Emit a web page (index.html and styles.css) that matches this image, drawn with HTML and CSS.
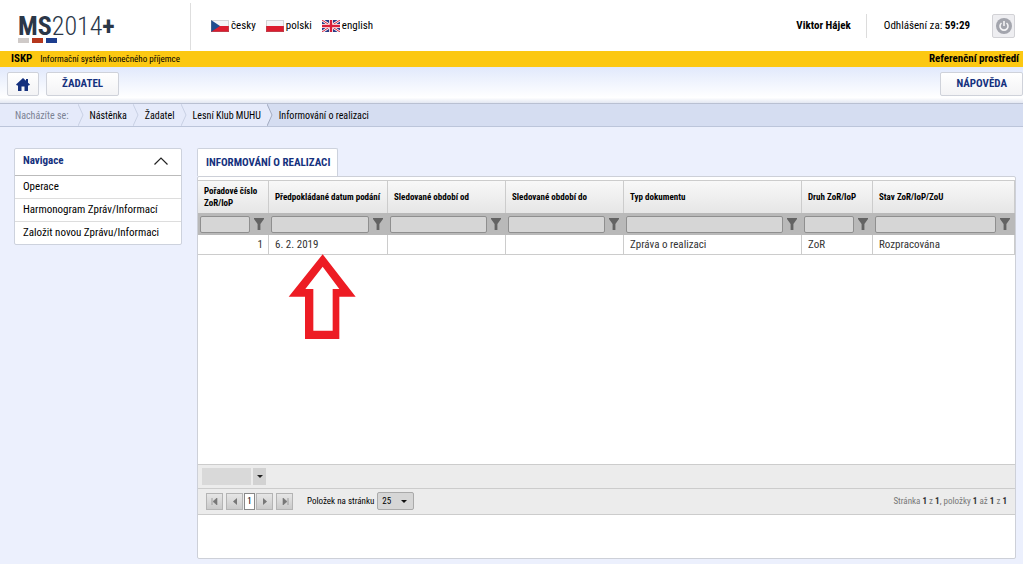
FILE: index.html
```html
<!DOCTYPE html>
<html lang="cs">
<head>
<meta charset="utf-8">
<meta name="viewport" content="width=device-width, initial-scale=1">
<title>MS2014+ – Informování o realizaci</title>
<link rel="stylesheet" href="styles.css">
</head>
<body>
<svg class="defs" aria-hidden="true">
  <symbol id="funnel" viewBox="0 0 10 12"><path d="M0 0h10v1L6.400 6V12H3.600V6L0 1z" fill="#636363"/></symbol>
  <symbol id="chevron" viewBox="0 0 6 22"><path d="M0 0l5 11-5 11" fill="none" stroke="#c9d1e4"/></symbol>
</svg>

<header class="top">
  <a class="logo" href="#" aria-label="MS2014+">
    <span class="logo-text"><b>MS</b><span class="logo-year">2014</span><b>+</b></span>
    <span class="logo-bars"><i class="bar-grey"></i><i class="bar-red"></i><i class="bar-blue"></i></span>
  </a>
  <nav class="langs">
    <a href="#"><svg width="18" height="12" viewBox="0 0 18 12"><path fill="#f4f4f6" d="M0 0h18v6H0z"/><path fill="#dc1c2e" d="M0 6h18v6H0z"/><path fill="#1f4c8f" d="M0 0l9 6-9 6z"/><path d="M.5.5h17v11H.5z" fill="none" stroke="#888" stroke-opacity=".3"/></svg>česky</a>
    <a href="#"><svg width="18" height="12" viewBox="0 0 18 12"><path fill="#f4f4f6" d="M0 0h18v6H0z"/><path fill="#dc1c2e" d="M0 6h18v6H0z"/><path d="M.5.5h17v11H.5z" fill="none" stroke="#888" stroke-opacity=".3"/></svg>polski</a>
    <a href="#"><svg width="18" height="12" viewBox="0 0 18 12"><path fill="#2a3d86" d="M0 0h18v12H0z"/><path d="M0 0l18 12M18 0L0 12" stroke="#fff" stroke-width="2.6"/><path d="M0 0l18 12M18 0L0 12" stroke="#d8203a" stroke-width="1"/><path d="M9 0v12M0 6h18" stroke="#fff" stroke-width="4"/><path d="M9 0v12M0 6h18" stroke="#d8203a" stroke-width="2.4"/></svg>english</a>
  </nav>
  <div class="session">
    <b class="user">Viktor Hájek</b>
    <span class="logout">Odhlášení za: <b>59:29</b></span>
    <button class="power" type="button" aria-label="Odhlásit">
      <svg width="18" height="18" viewBox="0 0 18 18"><circle cx="9" cy="9" r="8" fill="#a3a5ad"/><path d="M6.500 6a4 4 0 1 0 5 0M9 4v5" fill="none" stroke="#f4f4f6" stroke-width="1.600"/></svg>
    </button>
  </div>
</header>

<div class="strip">
  <b>ISKP</b><span class="strip-name">Informační systém konečného příjemce</span>
  <b class="strip-env">Referenční prostředí</b>
</div>

<div class="toolbar">
  <button class="tool tool-home" type="button" aria-label="Domů"><svg width="14" height="13" viewBox="0 0 14 13"><path d="M7 0l3 2.8V1h2v3.7L14 6.600 13 7.400h-1V13H8.500V8.500h-3V13H2V7.400H1L0 6.600z" fill="#15317e"/></svg></button>
  <button class="tool" type="button">ŽADATEL</button>
  <button class="tool tool-help" type="button">NÁPOVĚDA</button>
</div>

<nav class="crumbs" aria-label="Nacházíte se">
  <div class="crumb crumb-label">Nacházíte se:</div>
  <svg class="sep"><use href="#chevron"/></svg>
  <a class="crumb" href="#">Nástěnka</a>
  <svg class="sep"><use href="#chevron"/></svg>
  <a class="crumb" href="#">Žadatel</a>
  <svg class="sep"><use href="#chevron"/></svg>
  <a class="crumb" href="#">Lesní Klub MUHU</a>
  <svg class="sep sep-last" viewBox="0 0 6 22"><path d="M0 0l5 11-5 11z" fill="#e5eafa"/><path d="M0 0l5 11-5 11" fill="none" stroke="#a3abc0"/></svg>
  <span class="crumb crumb-here">Informování o realizaci</span>
</nav>

<div class="page">
  <aside class="side">
    <h2><button type="button" aria-expanded="true">Navigace<svg width="14" height="8" viewBox="0 0 14 8"><path d="M.5 7.500L7 1l6.500 6.500" fill="none" stroke="#222" stroke-width="1.200"/></svg></button></h2>
    <a href="#">Operace</a>
    <a href="#">Harmonogram Zpráv/Informací</a>
    <a href="#">Založit novou Zprávu/Informaci</a>
  </aside>

  <main class="content">
    <h1 class="tab">INFORMOVÁNÍ O REALIZACI</h1>
    <section class="panel">
      <table class="grid">
        <colgroup><col class="c-s"><col class="c-date"><col class="c-m"><col class="c-m"><col><col class="c-s"><col class="c-l"></colgroup>
        <thead>
          <tr class="heads"><th>Pořadové číslo ZoR/IoP</th><th>Předpokládané datum podání</th><th>Sledované období od</th><th>Sledované období do</th><th>Typ dokumentu</th><th>Druh ZoR/IoP</th><th>Stav ZoR/IoP/ZoU</th></tr>
          <tr class="filters">
            <td><div><input type="text" aria-label="Filtr: Pořadové číslo"><svg><use href="#funnel"/></svg></div></td>
            <td><div><input type="text" aria-label="Filtr: Předpokládané datum podání"><svg><use href="#funnel"/></svg></div></td>
            <td><div><input type="text" aria-label="Filtr: Sledované období od"><svg><use href="#funnel"/></svg></div></td>
            <td><div><input type="text" aria-label="Filtr: Sledované období do"><svg><use href="#funnel"/></svg></div></td>
            <td><div><input type="text" aria-label="Filtr: Typ dokumentu"><svg><use href="#funnel"/></svg></div></td>
            <td><div><input type="text" aria-label="Filtr: Druh"><svg><use href="#funnel"/></svg></div></td>
            <td><div><input type="text" aria-label="Filtr: Stav"><svg><use href="#funnel"/></svg></div></td>
          </tr>
        </thead>
        <tbody>
          <tr><td class="num">1</td><td class="marked">6. 2. 2019<svg class="arrow" viewBox="0 0 204 258"><path fill="#ed1c24" fill-rule="evenodd" d="M104 1L203 128H154V255H51V128H2zM104 38L52 105H76V230H134V105H154z"/></svg></td><td></td><td></td><td>Zpráva o realizaci</td><td>ZoR</td><td>Rozpracována</td></tr>
        </tbody>
      </table>
      <div class="export">
        <select class="export-select" aria-label="Export"><option></option></select>
        <svg class="export-arrow" viewBox="0 0 13 17" aria-hidden="true"><path d="M4 7h6L7 10z" fill="#222"/></svg>
      </div>
      <div class="pager">
        <button class="pg" type="button" aria-label="První"><svg width="8" height="7"><path d="M1 0v7M2 3.500L6 0v7z" fill="#777" stroke="#777" stroke-width=".6"/></svg></button>
        <div class="pg-group">
          <button class="pg" type="button" aria-label="Předchozí"><svg width="8" height="7"><path d="M2 3.500L6 0v7z" fill="#777"/></svg></button>
          <button class="pg pg-now" type="button">1</button>
          <button class="pg" type="button" aria-label="Další"><svg width="8" height="7"><path d="M6 3.500L2 0v7z" fill="#777"/></svg></button>
        </div>
        <button class="pg" type="button" aria-label="Poslední"><svg width="8" height="7"><path d="M7 0v7M6 3.500L2 0v7z" fill="#777" stroke="#777" stroke-width=".6"/></svg></button>
        <label class="size-label" for="size">Položek na stránku</label>
        <span class="size"><select id="size"><option>25</option></select><svg width="6" height="3" viewBox="0 0 6 3"><path d="M0 0h6L3 3z" fill="#111"/></svg></span>
        <p class="range">Stránka <b>1</b> z <b>1</b>, položky <b>1</b> až <b>1</b> z <b>1</b></p>
      </div>
      <div class="below"></div>
    </section>
  </main>
</div>
</body>
</html>
```

FILE: styles.css
```css
* { box-sizing: border-box; }
body {
  margin: 0;
  min-height: 100vh;
  display: flex;
  flex-direction: column;
  background: #ecf0fd;
  color: #000;
  font: 11px/14px "Roboto Condensed", "Liberation Sans Narrow", Roboto, sans-serif;
}
a { color: inherit; text-decoration: none; }
button, input, select { font: inherit; color: inherit; margin: 0; padding: 0; }
svg { display: block; flex: none; }
.defs { position: absolute; width: 0; height: 0; }

.top { display: flex; align-items: center; height: 51px; background: #fff; }
.logo { width: 191px; height: 47px; align-self: flex-start; margin-top: 3px; padding: 9px 0 0 18px; border-right: 1px solid #dedede; color: #2b3748; }
.logo-text { display: block; font-size: 26px; line-height: 28px; height: 26px; white-space: nowrap; }
.logo-year { font-weight: 300; }
.logo-bars { display: flex; gap: 3px; }
.logo-bars i { width: 11px; height: 5px; }
.bar-grey { background: #cfcac8; }
.bar-red { background: #b5371d; }
.bar-blue { background: #1c3d8e; }
.langs { display: flex; gap: 10px; padding-left: 20px; }
.langs a { display: flex; align-items: center; gap: 2px; }
.session { display: flex; align-items: center; margin-left: auto; padding-right: 8px; }
.user { padding-right: 15px; line-height: 24px; border-right: 1px solid #dcdcdc; }
.logout { padding: 0 22px 0 17px; }
.power { display: grid; place-items: center; width: 23px; height: 24px; border: 1px solid #d2d2d6; border-radius: 2px; background: #eeeef1; }

.strip { display: flex; align-items: center; height: 16px; padding: 0 4px 0 11px; background: #fcc812; }
.strip-name { padding-left: 8px; font-size: 9px; }
.strip-env { margin-left: auto; }

.toolbar { display: flex; gap: 7px; height: 37px; padding: 5px 0 0 7px; background: linear-gradient(#e1e9fc, #fff 85%, #e3e7f2); border-bottom: 1px solid #b9c0d2; }
.tool { display: grid; place-items: center; height: 24px; padding: 0 15px; border: 1px solid #cfd2da; border-radius: 2px; background: linear-gradient(#fff, #f3f3f5); color: #15317e; font-weight: bold; }
.tool-home { width: 32px; padding: 0; }
.tool-help { margin-left: auto; }

.crumbs { display: flex; height: 23px; font-size: 10px; line-height: 23px; background: #d5ddf1; border-bottom: 1px solid #bcc5da; }
.crumb { padding: 0 6px; background: #e5eafa; }
.crumb-label { padding: 0 9px 0 15px; color: #7b8294; }
.crumb-here { background: none; }
.sep { width: 6px; height: 22px; background: #e5eafa; }
.sep-last { background: none; }

.page { flex: 1; display: flex; align-items: stretch; gap: 15px; padding: 21px 7px 5px 14px; }
.side { align-self: flex-start; width: 168px; border: 1px solid #cdd2dd; border-radius: 2px; background: #fff; }
.side h2 { margin: 0; font-size: 11px; border-bottom: 1px solid #bbb; }
.side button { display: flex; align-items: center; justify-content: space-between; width: 100%; height: 26px; padding: 0 13px 2px 8px; border: 0; background: none; color: #15317e; font-weight: bold; }
.side a { display: block; padding-left: 8px; line-height: 22px; border-bottom: 1px solid #ddd; white-space: nowrap; }
.side a:last-child { border-bottom: 0; }

.content { flex: 1; display: flex; flex-direction: column; align-items: flex-start; min-width: 0; }
.tab { margin: 0; padding: 0 7px 0 8px; font-size: 11px; line-height: 27px; border: 1px solid #cdd2dd; border-bottom: 0; border-radius: 2px 2px 0 0; background: #fff; color: #15317e; white-space: nowrap; }
.panel { flex: 1; align-self: stretch; display: flex; flex-direction: column; padding-top: 3px; border: 1px solid #cdd0d8; border-radius: 2px; background: #fff; }

.grid { width: 100%; table-layout: fixed; border-spacing: 0; border-top: 1px solid #ccc; }
.c-s { width: 71px; }
.c-m { width: 118px; }
.c-date { width: 119px; }
.c-l { width: 142px; }
.heads th { height: 32px; padding: 0 0 0 6px; border-right: 1px solid #ccc; background: linear-gradient(#f8f8f8, #e6e6e6); font-size: 9px; line-height: 12px; text-align: left; }
.filters td { height: 22px; padding: 0; background: #b9b9b9; }
.filters div { display: flex; align-items: center; gap: 4px; padding: 0 5px 0 2px; }
.filters input { flex: 1; min-width: 0; height: 17px; border: 1px solid #8f8f8f; border-radius: 2px; background: #d6d6d6; }
.filters svg { width: 10px; height: 12px; }
.grid tbody td { height: 20px; padding: 0 6px; border-right: 1px solid #ccc; border-bottom: 1px solid #ccc; color: #333; white-space: nowrap; }
.grid .num { text-align: right; padding-right: 5px; }
.marked { position: relative; }
.arrow { position: absolute; left: 19px; top: 100%; width: 68px; height: 86px; }

.export { display: flex; align-items: center; gap: 2px; margin-top: auto; height: 24px; padding: 0 0 1px 4px; background: #ececec; border-top: 1px solid #ccc; }
.export-select { appearance: none; width: 49px; height: 17px; border: 0; background: #d9d9d9; }
.export-arrow { width: 13px; height: 17px; background: #d2d2d2; }
.pager { display: flex; align-items: center; height: 27px; padding: 0 8px 1px; background: #ececec; border-top: 1px solid #ccc; border-bottom: 1px solid #ccc; font-size: 9px; }
.pg { display: grid; place-items: center; width: 17px; height: 17px; border: 1px solid #b4b4b4; background: linear-gradient(#e6e6e6, #cacaca); }
.pg-group { display: flex; gap: 1px; margin: 0 3px; }
.pg-now { width: 11px; background: #fff; border-color: #888; }
.size-label { padding: 0 3px 0 14px; }
.size { display: grid; align-items: center; }
.size select { grid-area: 1 / 1; appearance: none; width: 37px; height: 18px; padding-left: 4px; border: 1px solid #aaa; border-radius: 2px; background: #d6d6d6; }
.size svg { grid-area: 1 / 1; justify-self: end; margin-right: 7px; pointer-events: none; }
.range { margin: 0 0 0 auto; color: #777; }
.range b { color: #333; }
.below { height: 43px; }
```
